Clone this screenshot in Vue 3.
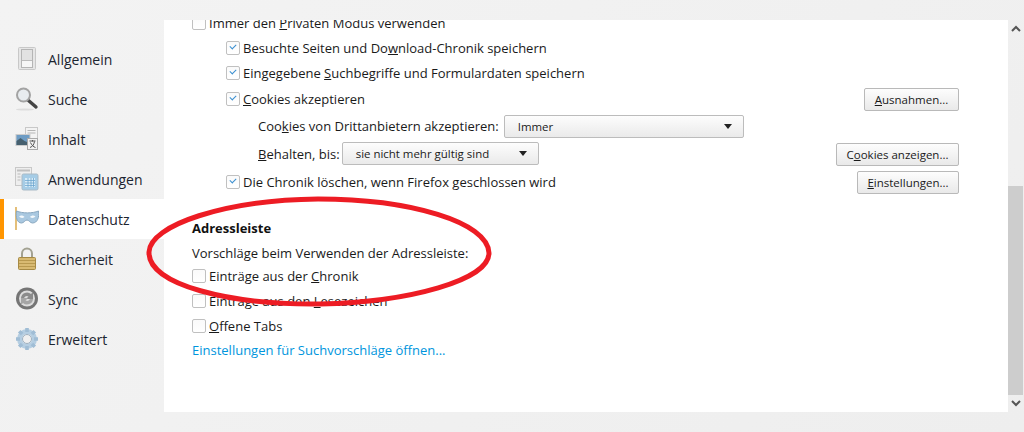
<template>
  <div class="page">
    <nav class="sidebar">
      <div class="nav-item">
        <svg class="nav-icon" viewBox="0 0 24 24"><rect x="3.500" y="0.500" width="17" height="22" rx="1" fill="#e6e6e6" stroke="#c8c8c8"/><rect x="6.500" y="2.500" width="11" height="18" fill="#f6f6f6" stroke="#b5b5b5"/><rect x="7" y="3" width="10" height="10" fill="#e2e2e2"/><rect x="7" y="13" width="10" height="1" fill="#bbb"/></svg>
        <span>Allgemein</span>
      </div>
      <div class="nav-item">
        <svg class="nav-icon" viewBox="0 0 24 24"><ellipse cx="10" cy="22.500" rx="9" ry="1" fill="#ddd"/><line x1="13.500" y1="13.500" x2="21" y2="20" stroke="#444" stroke-width="3.400" stroke-linecap="round"/><circle cx="8.500" cy="8" r="6.500" fill="#e8ecef" stroke="#a3a3a3" stroke-width="2"/></svg>
        <span>Suche</span>
      </div>
      <div class="nav-item">
        <svg class="nav-icon" viewBox="0 0 24 24"><rect x="10.500" y="0.500" width="12" height="13" fill="#f3f3f3" stroke="#c8c8c8"/><path d="M12.500 3.500h8M12.500 6h8" stroke="#b5b5b5"/><rect x="1" y="7.500" width="14" height="11" fill="#6e9cc4" stroke="#ccc"/><path d="M1.500 14l4-3 4 3 5 2v2h-13z" fill="#46606f"/><rect x="12.500" y="11.500" width="10" height="11" fill="#f2f2f2" stroke="#a9a9a9"/><path d="M14.500 14h6M17.500 13v1.500M15 20.500c3-1 4-3.500 4.500-6M15.500 15.500c1 2.500 3 4.500 5 5" fill="none" stroke="#555"/></svg>
        <span>Inhalt</span>
      </div>
      <div class="nav-item">
        <svg class="nav-icon" viewBox="0 0 24 24"><rect x="0.500" y="0.500" width="16" height="18" fill="#eee" stroke="#c8c8c8"/><path d="M2 3.500h13" stroke="#c0c0c0" stroke-width="2"/><path d="M2.500 7h3M2.500 10h3M2.500 13h3" stroke="#bbb"/><rect x="7" y="7" width="16" height="16" rx="1.500" fill="#a5cce6" stroke="#a9bac6"/><path d="M10 11h10v9H10z" fill="#d9ecf7"/><path d="M10 13.500h10M10 16h10M10 18.500h10M13 11v9M16 11v9M18.500 11v9" stroke="#6ea7cf" stroke-width=".8"/></svg>
        <span>Anwendungen</span>
      </div>
      <div class="nav-item active">
        <svg class="nav-icon" viewBox="0 0 24 24"><line x1="1" y1="0" x2="1" y2="23" stroke="#d9a441" stroke-width="1.400"/><path d="M1.500 4c6 2.500 16 2.500 22 0 1 6-1 12-6 12-2.500 0-3.500-3-5.500-3s-3 3-5.500 3C2 16 .5 10 1.500 4z" fill="#a9c8e0" stroke="#8aa8c0"/><path d="M4 9.500c2-1.500 4-1 5.500.5-2 1.500-4 1-5.500-.5zM20.500 9.500c-2-1.500-4-1-5.500.5 2 1.500 4 1 5.500-.5z" fill="#f4f8fb"/></svg>
        <span>Datenschutz</span>
      </div>
      <div class="nav-item">
        <svg class="nav-icon" viewBox="0 0 24 24"><path d="M7 11V6.500a5 5 0 0 1 10 0V11" fill="none" stroke="#a3a292" stroke-width="2"/><rect x="3.500" y="10.500" width="17" height="12" rx="1" fill="#d8ba72" stroke="#a68a45"/><path d="M4 13.500h16M4 16.500h16M4 19.500h16" stroke="#b8994f"/></svg>
        <span>Sicherheit</span>
      </div>
      <div class="nav-item">
        <svg class="nav-icon" viewBox="0 0 24 24"><circle cx="12" cy="11.500" r="11" fill="#757575"/><circle cx="12" cy="11.500" r="8" fill="#dcdcdc"/><path d="M6 11a6 6 0 0 1 10-4l2-2v7h-7l2.500-2.500A3.500 3.500 0 0 0 9 11z" fill="#8b8b8b"/><path d="M18 12a6 6 0 0 1-10 4l-2 2v-7h7l-2.500 2.500A3.500 3.500 0 0 0 15 12z" fill="#a5a5a5"/></svg>
        <span>Sync</span>
      </div>
      <div class="nav-item">
        <svg class="nav-icon" viewBox="0 0 24 24"><circle cx="12" cy="12" r="7.500" fill="none" stroke="#b5cee2" stroke-width="5"/><path d="M12 1v4M12 19v4M1 12h4M19 12h4M4.200 4.200l2.900 2.900M16.900 16.900l2.900 2.900M4.200 19.800l2.900-2.900M16.900 7.100l2.900-2.900" stroke="#a0bdd5" stroke-width="3.600"/><circle cx="12" cy="12" r="4.500" fill="#f0f0f0" stroke="#9db0c0"/></svg>
        <span>Erweitert</span>
      </div>
    </nav>

    <main class="content">
      <div class="rows">
        <div class="row first">
          <i class="box"></i><span>Immer den <u>P</u>rivaten Modus verwenden</span>
        </div>
        <div class="row nested">
          <i class="box checked"></i><span>Besuchte Seiten und Do<u>w</u>nload-Chronik speichern</span>
        </div>
        <div class="row nested">
          <i class="box checked"></i><span>Eingegebene <u>S</u>uchbegriffe und Formulardaten speichern</span>
        </div>
        <div class="row nested split cookies">
          <div class="left"><i class="box checked"></i><span><u>C</u>ookies akzeptieren</span></div>
          <button class="btn btn-exceptions"><u>A</u>usnahmen...</button>
        </div>
        <div class="row sub">
          <span>Coo<u>k</u>ies von Drittanbietern akzeptieren:</span>
          <div class="select select-third">Immer<b class="caret"></b></div>
        </div>
        <div class="row sub split keep">
          <div class="left">
            <span><u>B</u>ehalten, bis:</span>
            <div class="select select-keep">sie nicht mehr gültig sind<b class="caret"></b></div>
          </div>
          <button class="btn btn-show">C<u>o</u>okies anzeigen...</button>
        </div>
        <div class="row nested split clear-history">
          <div class="left"><i class="box checked"></i><span>Die Chronik löschen, wenn Firefox <u>g</u>eschlossen wird</span></div>
          <button class="btn btn-settings"><u>E</u>instellungen...</button>
        </div>

        <h2 class="heading">Adressleiste</h2>
        <div class="row intro">Vorschläge beim Verwenden der Adressleiste:</div>
        <div class="row"><i class="box"></i><span>Einträge aus der <u>C</u>hronik</span></div>
        <div class="row"><i class="box"></i><span>Einträge aus den <u>L</u>esezeichen</span></div>
        <div class="row"><i class="box"></i><span><u>O</u>ffene Tabs</span></div>
        <div class="row link-row"><a class="link">Einstellungen für Suchvorschläge öffnen...</a></div>
      </div>
    </main>

    <div class="scrollbar">
      <div class="arrow"><svg width="10" height="7" viewBox="0 0 10 7"><path d="M1 6l4-4 4 4" fill="none" stroke="#555" stroke-width="2"/></svg></div>
      <div class="track"><div class="thumb"></div></div>
      <div class="arrow"><svg width="10" height="7" viewBox="0 0 10 7"><path d="M1 1l4 4 4-4" fill="none" stroke="#555" stroke-width="2"/></svg></div>
    </div>

    <svg class="scribble" width="1024" height="432" viewBox="0 0 1024 432">
      <path d="M149 252C150 225 225 200 318 199 410 199 488 222 489 253 489 280 410 302 320 304 230 305 148 285 149 252Z" fill="none" stroke="#ed1c24" stroke-width="5"/>
    </svg>
  </div>
</template>

<script setup>
</script>

<style>
body { background: #f0f0f0; }
</style>

<style scoped>
.page {
  position: relative;
  width: 1024px;
  height: 432px;
  overflow: hidden;
  display: flex;
  background: linear-gradient(135deg, #f3f3f3, #eeeeee);
  font-family: "Open Sans", "Noto Sans", sans-serif;
  font-size: 13px;
  color: #1a1a1a;
}

.sidebar { width: 164px; flex: none; padding-top: 39px; }
.nav-item { height: 40px; display: flex; align-items: center; font-size: 14px; color: #1c2530; padding-left: 15px; gap: 9px; }
.nav-item.active { background: #fff; box-shadow: inset 4px 0 0 #ff9500; }
.nav-icon { width: 24px; height: 24px; flex: none; }

.content { width: 844px; height: 392px; margin-top: 20px; background: #fff; overflow: hidden; flex: none; }
.rows { padding: 0 49px 0 28px; margin-top: -10px; }
.row { height: 25px; display: flex; align-items: center; }
.row.first { margin-top: 0.500px; }
.nested { padding-left: 34px; }
.cookies { margin-top: 1px; }
.sub { padding-left: 66px; height: 27px; margin-top: 1px; }
.keep { margin-top: 0.500px; }
.keep .btn { margin-top: 2px; }
.clear-history { margin-top: 2.500px; }
.intro { margin-bottom: -2px; }
.link-row { margin-top: -1px; }
.split { justify-content: space-between; }
.left { display: flex; align-items: center; }

.box { width: 12px; height: 12px; margin-right: 3px; border: 1px solid #c0c0c0; border-radius: 2px; background: linear-gradient(#fafafa, #fff); position: relative; flex: none; }
.box.checked::after { content: ""; position: absolute; left: 3px; top: 2px; width: 5px; height: 3px; border-left: 1.500px solid #3a8fd0; border-bottom: 1.500px solid #3a8fd0; transform: rotate(-45deg); }

.btn { height: 23px; padding: 0; border: 1px solid #b9b9b9; border-radius: 2px; background: linear-gradient(#fdfdfd, #e9e9e9); font: inherit; font-size: 11.500px; color: #1a1a1a; }
.btn-exceptions { width: 95px; }
.btn-show { width: 123px; }
.btn-settings { width: 102px; }

.select { height: 23px; box-sizing: border-box; border: 1px solid #bcbcbc; border-radius: 2px; background: linear-gradient(#fdfdfd, #eaeaea); display: flex; align-items: center; justify-content: space-between; padding: 0 11px 0 13px; font-size: 11.450px; }
.select-third { width: 240px; margin-left: 5px; }
.select-keep { width: 197px; margin-left: 2px; }
.caret { width: 0; height: 0; border: 4px solid transparent; border-top: 5px solid #222; border-bottom: 0; }

.heading { margin: 21px 0 0; height: 25px; line-height: 25px; font-size: 13px; font-weight: 700; color: #111; }
.link { color: #0095dd; }

.scrollbar { width: 16px; height: 392px; margin-top: 20px; flex: none; display: flex; flex-direction: column; }
.arrow { height: 17px; display: flex; align-items: center; justify-content: center; }
.track { flex: 1; padding-top: 149px; }
.thumb { width: 15px; height: 209px; background: #cdcdcd; }

.scribble { position: absolute; left: 0; top: 0; pointer-events: none; }
</style>
